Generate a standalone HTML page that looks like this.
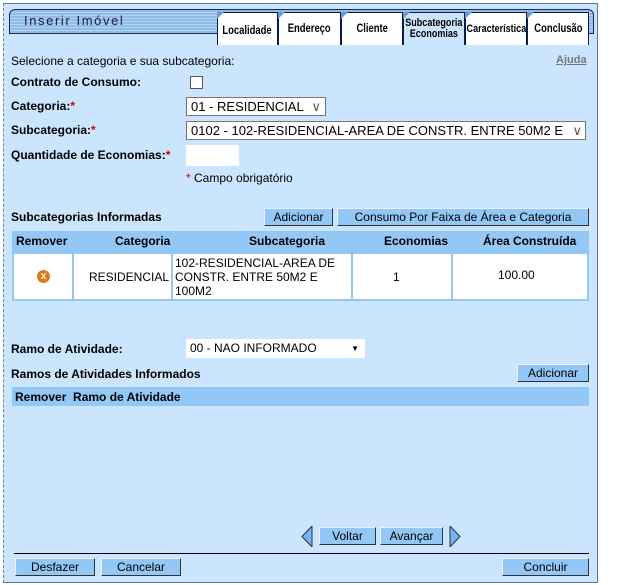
<!DOCTYPE html>
<html><head><meta charset="utf-8"><style>
*{box-sizing:border-box;margin:0;padding:0}
body{width:634px;height:585px;background:#fff;font-family:"Liberation Sans",sans-serif;font-size:12px;color:#000;position:relative;overflow:hidden}
.a{position:absolute;white-space:nowrap}
#panel{position:absolute;left:3px;top:3px;width:595px;height:580px;background:#cbe5fe;border:1px solid #5a7a9a;border-left:1px dashed #6a8aaa}
.hdr{position:absolute;left:9px;top:9px;width:585px;height:25px;border:1px solid #1a2a55;border-radius:6px 6px 0 0;background:repeating-linear-gradient(#8fbbe8 0 2px,#b5d5f5 2px 3px)}
.tab{position:absolute;top:12px;height:33px;background:#fff;border:1px solid #0a1a50;border-bottom:none;font-weight:bold;font-size:11.5px;text-align:center;line-height:11px;display:flex;align-items:center;justify-content:center}
.tab span{display:inline-block;transform:scaleX(0.82);white-space:nowrap}
.tab:before{content:"";position:absolute;left:-1px;top:-1px;border-top:7px solid #6a9ad0;border-right:7px solid transparent}
.btn{position:absolute;height:18px;background:#92c7f6;border:1px solid #333;border-top-color:#eef;border-left-color:#eef;font-size:12px;text-align:center;line-height:16px}
.lab{font-weight:bold;font-size:12px}
.req{color:#c00}
.sel{position:absolute;background:#fff;border:1px solid #777;height:19px;font-size:13px;line-height:17px;padding-left:4px}
</style></head><body>
<div id="panel"></div>
<div class="hdr"></div>
<div class="a" style="left:24px;top:13px;font-size:13px;letter-spacing:1.6px;color:#223">Inserir Imóvel</div>
<div class="tab" style="left:217px;width:61px;padding-top:4px"><span>Localidade</span></div>
<div class="tab" style="left:278px;width:63px"><span>Endereço</span></div>
<div class="tab" style="left:341px;width:62px"><span>Cliente</span></div>
<div class="tab" style="left:403px;width:62px;background:#cbe5fe;font-size:11px"><span>Subcategoria<br>Economias</span></div>
<div class="tab" style="left:465px;width:62px;font-size:11px"><span>Característica</span></div>
<div class="tab" style="left:527px;width:62px"><span>Conclusão</span></div>

<div class="a" style="left:11px;top:54px">Selecione a categoria e sua subcategoria:</div>
<div class="a" style="left:556px;top:54px;color:#777;font-weight:bold;text-decoration:underline;font-size:11px">Ajuda</div>
<div class="a lab" style="left:11px;top:75px">Contrato de Consumo:</div>
<div class="a" style="left:190px;top:76px;width:13px;height:13px;border:1px solid #555;background:#fff"></div>
<div class="a lab" style="left:11px;top:99px">Categoria:<span class="req">*</span></div>
<div class="sel" style="left:186px;top:97px;width:140px">01 - RESIDENCIAL <span style="position:absolute;right:4px;color:#555">&#x2228;</span></div>
<div class="a lab" style="left:11px;top:123px">Subcategoria:<span class="req">*</span></div>
<div class="sel" style="left:186px;top:121px;width:400px;overflow:hidden">0102 - 102-RESIDENCIAL-AREA DE CONSTR. ENTRE 50M2 E<span style="position:absolute;right:3px;color:#555;background:#fff">&#x2228;</span></div>
<div class="a lab" style="left:11px;top:148px">Quantidade de Economias:<span class="req">*</span></div>
<div class="a" style="left:186px;top:145px;width:53px;height:21px;background:#fff"></div>
<div class="a" style="left:186px;top:171px"><span class="req">*</span> Campo obrigatório</div>

<div class="a lab" style="left:11px;top:210px">Subcategorias Informadas</div>
<div class="btn" style="left:264px;top:208px;width:69px">Adicionar</div>
<div class="btn" style="left:337px;top:208px;width:252px">Consumo Por Faixa de Área e Categoria</div>
<div class="a" style="left:12px;top:231px;width:577px;height:70px;background:#92c7f6"></div>
<div class="a lab" style="left:16px;top:234px">Remover</div>
<div class="a lab" style="left:115px;top:234px">Categoria</div>
<div class="a lab" style="left:249px;top:234px">Subcategoria</div>
<div class="a lab" style="left:384px;top:234px">Economias</div>
<div class="a lab" style="left:483px;top:234px">Área Construída</div>
<div class="a" style="left:14px;top:254px;width:58px;height:45px;background:#fff"></div>
<div class="a" style="left:74px;top:254px;width:97px;height:45px;background:#fff"></div>
<div class="a" style="left:173px;top:254px;width:178px;height:45px;background:#fff"></div>
<div class="a" style="left:353px;top:254px;width:98px;height:45px;background:#fff"></div>
<div class="a" style="left:453px;top:254px;width:134px;height:45px;background:#fff"></div>
<div class="a" style="left:37px;top:270px;width:13px;height:13px;border-radius:50%;background:#e07a20;color:#fff;font-weight:bold;font-size:10px;text-align:center;line-height:13px">x</div>
<div class="a" style="left:89px;top:270px">RESIDENCIAL</div>
<div class="a" style="left:175px;top:256px;line-height:14px">102-RESIDENCIAL-AREA DE<br>CONSTR. ENTRE 50M2 E<br>100M2</div>
<div class="a" style="left:393px;top:270px">1</div>
<div class="a" style="left:498px;top:268px">100.00</div>

<div class="a lab" style="left:11px;top:342px">Ramo de Atividade:</div>
<div class="a" style="left:186px;top:339px;width:179px;height:19px;background:#fff;font-size:12px;line-height:19px;padding-left:4px">00 - NAO INFORMADO<span style="position:absolute;right:6px;font-size:8px">&#9660;</span></div>
<div class="a lab" style="left:11px;top:367px">Ramos de Atividades Informados</div>
<div class="btn" style="left:517px;top:364px;width:72px">Adicionar</div>
<div class="a lab" style="left:12px;top:387px;width:577px;height:19px;background:#92c7f6;padding:3px 0 0 3px">Remover&nbsp; Ramo de Atividade</div>

<svg class="a" style="left:301px;top:526px" width="12" height="21"><path d="M11 0 L1 10.5 L11 21 Z" fill="#7ab4ee" stroke="#234" stroke-width="1"/></svg>
<div class="btn" style="left:319px;top:527px;width:57px">Voltar</div>
<div class="btn" style="left:380px;top:527px;width:63px">Avançar</div>
<svg class="a" style="left:449px;top:526px" width="12" height="21"><path d="M1 0 L11 10.5 L1 21 Z" fill="#7ab4ee" stroke="#234" stroke-width="1"/></svg>
<div class="a" style="left:14px;top:553px;width:575px;height:1px;background:#000"></div>
<div class="btn" style="left:15px;top:558px;width:80px">Desfazer</div>
<div class="btn" style="left:101px;top:558px;width:80px">Cancelar</div>
<div class="btn" style="left:502px;top:558px;width:87px">Concluir</div>
</body></html>
